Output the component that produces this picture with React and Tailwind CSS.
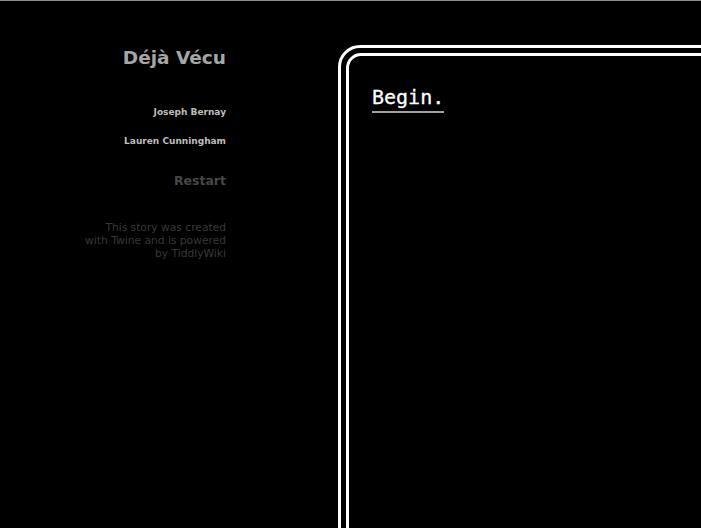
export default function App() {
  return (
    <div className="h-[528px] w-[701px] bg-black overflow-hidden border-t border-[#8a9099] flex" style={{ fontFamily: '"DejaVu Sans", Verdana, sans-serif' }}>
      <div className="w-[226px] shrink-0 text-right">
        <div className="mt-[45px] text-[18.5px] leading-[24px] font-bold text-[#a6a6a6]">Déjà Vécu</div>
        <div className="mt-[36px] text-[9px] leading-[12px] font-bold text-[#bdbdbd]">Joseph Bernay</div>
        <div className="mt-[17px] text-[9px] leading-[12px] font-bold text-[#bdbdbd]">Lauren Cunningham</div>
        <div className="mt-[25px] text-[12.5px] leading-[18px] font-bold text-[#474747]">Restart</div>
        <div className="mt-[31px] text-[10.7px] leading-[13px] text-[#383838]">
          This story was created<br />with Twine and is powered<br />by TiddlyWiki
        </div>
      </div>
      <div className="ml-[112px] mt-[44px] shrink-0 w-[500px] h-[600px] border-[3px] border-white rounded-tl-[22px] p-[5px]">
        <div className="h-full w-full border-[3px] border-white rounded-tl-[15px] pl-[23px] pt-[28px]">
          <span className="inline-block text-white text-[20px] leading-[26px] border-b-2 border-[#a0a0a0] pb-[1px] [-webkit-text-stroke:0.3px_white]" style={{ fontFamily: '"DejaVu Sans Mono", "Liberation Mono", monospace' }}>Begin.</span>
        </div>
      </div>
    </div>
  );
}
